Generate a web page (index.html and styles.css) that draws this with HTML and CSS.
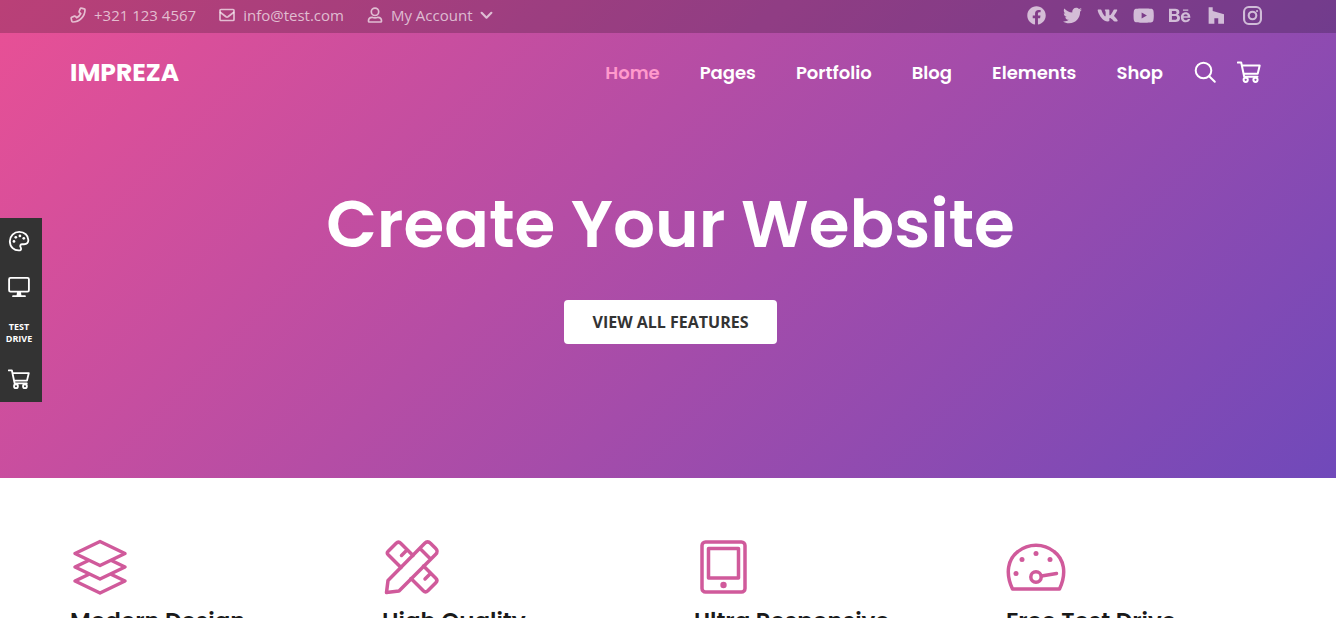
FILE: index.html
```html
<!DOCTYPE html>
<html lang="en">
<head>
  <meta charset="UTF-8">
  <meta name="viewport" content="width=device-width, initial-scale=1.0">
  <title>Impreza</title>
  <link rel="stylesheet" href="styles.css">
</head>
<body>
  <div class="top-area">
    <header>
      <div class="topbar">
        <div class="container topbar-inner">
          <div class="contacts">
            <a href="tel:+3211234567" class="contact">
              <svg class="icon-small" viewBox="0 0 16 16"><path d="M11.3 1.2l2.9.6c.5.1.8.4.8.9C15 9.500 9.500 15 2.700 15c-.5 0-.8-.3-.9-.8l-.6-2.900c-.1-.4.1-.8.5-1l2.800-1.200c.4-.1.8 0 1 .3l1.200 1.400c1.800-.9 3.200-2.300 4.100-4.100L9.400 5.500c-.3-.2-.4-.6-.3-1l1.200-2.800c.2-.4.6-.6 1-.5z"/></svg>
              <span>+321 123 4567</span>
            </a>
            <a href="mailto:info@test.com" class="contact">
              <svg class="icon-small" viewBox="0 0 16 16"><rect x="1" y="2.500" width="14" height="11" rx="1"/><path d="M1.500 5.500L7 9.700c.6.4 1.400.4 2 0l5.500-4.200"/></svg>
              <span>info@test.com</span>
            </a>
            <button class="contact account">
              <svg class="icon-small" viewBox="0 0 16 16"><circle cx="8" cy="4.800" r="3.700"/><path d="M5 10.300c1.200.5 1.800.6 3 .6s1.800-.1 3-.6c2 .1 3.500 1.600 3.500 3.500v.4c0 .5-.3.8-.8.8H2.300c-.5 0-.8-.3-.8-.8v-.4c0-1.900 1.500-3.400 3.500-3.500z"/></svg>
              <span>My Account</span>
              <svg class="chevron" viewBox="0 0 12 12"><path d="M1.500 3.500L6 8l4.500-4.500"/></svg>
            </button>
          </div>
          <div class="socials">
            <a href="#" aria-label="Facebook"><svg viewBox="0 0 512 512"><path d="M504 256C504 119 393 8 256 8S8 119 8 256c0 123.780 90.690 226.380 209.250 245V327.690h-63V256h63v-54.640c0-62.150 37-96.480 93.670-96.480 27.140 0 55.520 4.840 55.520 4.840v61h-31.280c-30.800 0-40.410 19.120-40.410 38.730V256h68.780l-11 71.690h-57.780V501C413.310 482.380 504 379.780 504 256z"/></svg></a>
            <a href="#" aria-label="Twitter"><svg viewBox="0 0 512 512"><path d="M459.370 151.716c.325 4.548.325 9.097.325 13.645 0 138.720-105.583 298.558-298.558 298.558-59.452 0-114.680-17.219-161.137-47.106 8.447.974 16.568 1.299 25.340 1.299 49.055 0 94.213-16.568 130.274-44.832-46.132-.975-84.792-31.188-98.112-72.772 6.498.974 12.995 1.624 19.818 1.624 9.421 0 18.843-1.300 27.614-3.573-48.081-9.747-84.143-51.980-84.143-102.985v-1.299c13.969 7.797 30.214 12.670 47.431 13.319-28.264-18.843-46.781-51.005-46.781-87.391 0-19.492 5.197-37.360 14.294-52.954 51.655 63.675 129.300 105.258 216.365 109.807-1.624-7.797-2.599-15.918-2.599-24.040 0-57.828 46.782-104.934 104.934-104.934 30.213 0 57.502 12.670 76.670 33.137 23.715-4.548 46.456-13.320 66.599-25.340-7.798 24.366-24.366 44.833-46.132 57.827 21.117-2.273 41.584-8.122 60.426-16.243-14.292 20.791-32.161 39.308-52.628 54.253z"/></svg></a>
            <a href="#" aria-label="VK"><svg viewBox="0 0 576 512"><path d="M545 117.700c3.700-12.500 0-21.700-17.800-21.700h-58.900c-15 0-21.900 7.900-25.600 16.700 0 0-30 73.100-72.400 120.500-13.700 13.700-20 18.100-27.500 18.100-3.700 0-9.400-4.400-9.400-16.900V117.700c0-15-4.200-21.700-16.600-21.700h-92.600c-9.400 0-15 7-15 13.500 0 14.200 21.200 17.500 23.400 57.500v86.800c0 19-3.400 22.500-10.900 22.500-20 0-68.600-73.400-97.400-157.400-5.800-16.300-11.500-22.900-26.600-22.900H38.800c-16.800 0-20.200 7.900-20.200 16.700 0 15.600 20 93.100 93.100 195.500C160.400 378.100 229 416 291.400 416c37.500 0 42.100-8.400 42.100-22.900 0-66.800-3.400-73.100 15.400-73.100 8.700 0 23.700 4.400 58.700 38.100 40 40 46.600 57.900 69 57.900h58.900c16.800 0 25.300-8.400 20.400-25-11.200-34.900-86.900-106.700-90.300-111.500-8.700-11.200-6.200-16.200 0-26.200.1-.1 72-101.300 79.400-135.600z"/></svg></a>
            <a href="#" aria-label="YouTube"><svg viewBox="0 0 576 512"><path d="M549.655 124.083c-6.281-23.650-24.787-42.276-48.284-48.597C458.781 64 288 64 288 64S117.220 64 74.629 75.486c-23.497 6.322-42.003 24.947-48.284 48.597-11.412 42.867-11.412 132.305-11.412 132.305s0 89.438 11.412 132.305c6.281 23.650 24.787 41.500 48.284 47.821C117.220 448 288 448 288 448s170.780 0 213.371-11.486c23.497-6.321 42.003-24.171 48.284-47.821 11.412-42.867 11.412-132.305 11.412-132.305s0-89.438-11.412-132.305zm-317.510 213.508V175.185l142.739 81.205-142.739 81.201z"/></svg></a>
            <a href="#" aria-label="Behance"><svg viewBox="0 0 576 512"><path d="M232 237.200c31.800-15.200 48.400-38.200 48.400-74 0-70.600-52.600-87.800-113.300-87.800H0v354.400h171.800c64.400 0 124.900-30.900 124.900-102.900 0-44.500-21.100-77.400-64.700-89.700zM77.900 135.900H151c28.100 0 53.400 7.900 53.400 40.500 0 30.100-19.700 42.200-47.500 42.200h-79v-82.700zm83.300 233.700H77.900V272h84.900c34.300 0 56 14.300 56 50.600 0 35.800-25.900 47-57.600 47zm358.500-240.700H376V94h143.700v34.900zM576 305.200c0-75.900-44.400-139.200-124.900-139.200-78.200 0-131.300 58.800-131.300 135.800 0 79.900 50.300 134.700 131.300 134.700 61.300 0 101-27.600 120.100-86.300H509c-6.700 21.900-34.300 33.500-55.700 33.500-41.300 0-63-24.200-63-65.300h185.100c.3-4.200.6-8.700.6-13.200zM390.400 274c2.300-33.700 24.700-54.800 58.500-54.800 35.400 0 53.200 20.800 56.200 54.800H390.400z"/></svg></a>
            <a href="#" aria-label="Houzz"><svg viewBox="0 0 448 512"><path d="M275.900 330.700H171.300V480H17V32h109.500v104.500l305.100 85.600V480H275.900z"/></svg></a>
            <a href="#" aria-label="Instagram"><svg class="outline" viewBox="0 0 18 18"><rect x="1" y="1" width="16" height="16" rx="4.500"/><circle cx="9" cy="9" r="3.600"/><circle class="dot" cx="13.300" cy="4.700" r="1"/></svg></a>
          </div>
        </div>
      </div>
      <div class="container navbar">
        <a href="#" class="logo">IMPREZA</a>
        <div class="nav-right">
          <nav>
            <a href="#" class="active">Home</a>
            <a href="#">Pages</a>
            <a href="#">Portfolio</a>
            <a href="#">Blog</a>
            <a href="#">Elements</a>
            <a href="#">Shop</a>
          </nav>
          <button class="nav-icon" aria-label="Search">
            <svg viewBox="0 0 24 24"><circle cx="10.500" cy="10.500" r="7.800"/><path d="M16.200 16.200l5.600 5.600"/></svg>
          </button>
          <a href="#" class="nav-icon" aria-label="Cart">
            <svg viewBox="0 0 24 24"><path d="M.8 2.500h3.400l3 14.200h13.300M5 5.500h17.700l-2 8.300H6.600"/><circle cx="8.700" cy="19.800" r="2.100"/><circle cx="18.500" cy="19.800" r="2.100"/></svg>
          </a>
        </div>
      </div>
    </header>
    <section class="hero">
      <h1>Create Your Website</h1>
      <a href="#features" class="btn">VIEW ALL FEATURES</a>
    </section>
  </div>

  <section class="container features" id="features">
    <div class="feature">
      <svg viewBox="0 0 60 60"><path d="M30 4.500l25 12-25 12-25-12z"/><path d="M18.500 23.500L5 30l25 12 25-12-13.500-6.500"/><path d="M18.500 37.500L5 44l25 12 25-12-13.500-6.500"/></svg>
      <h2>Modern Design</h2>
    </div>
    <div class="feature">
      <svg viewBox="0 0 60 60"><path d="M4.500 55.500l1.500-12L42.500 6.500c2.200-2.200 4-2.200 6.200 0l4.800 4.800c2.200 2.200 2.200 4 0 6.200L17 54zM38 11.500l10.500 10.500"/><path d="M19 30.500L6.200 17.700c-1.500-1.500-1.500-2 0-3.500l8-8c1.500-1.500 3-1.500 4.500 0L31 18.500M41.500 29L53.800 41.300c1.500 1.500 1.500 3 0 4.500l-8 8c-1.500 1.500-3 1.500-4.500 0L29 41.500M19.500 18.500l4.500-4.500M43 42l4.500-4.500"/></svg>
      <h2>High Quality</h2>
    </div>
    <div class="feature">
      <svg viewBox="0 0 60 60"><rect x="8" y="5" width="43" height="50" rx="3.500"/><rect x="14.500" y="11.500" width="30" height="29.500"/><circle class="dot" cx="29.500" cy="48" r="3.200"/></svg>
      <h2>Ultra Responsive</h2>
    </div>
    <div class="feature">
      <svg viewBox="0 0 60 60"><path d="M6.500 52C-1 36 2 22 12 14.500c10.500-8.500 25.500-8.500 36 0C58 22 61 36 53.500 52z"/><circle cx="30" cy="40" r="5.200"/><path d="M35.500 39L50.500 36.500"/><g class="dot"><circle cx="10" cy="36.500" r="2.500"/><circle cx="16" cy="22.500" r="2.500"/><circle cx="30" cy="16.500" r="2.500"/><circle cx="44" cy="22.500" r="2.500"/></g></svg>
      <h2>Free Test Drive</h2>
    </div>
  </section>

  <aside class="side-panel">
    <a href="#" aria-label="Colors"><svg viewBox="0 0 24 24"><path d="M13 22.200C6.500 23 2 18 2 12.200 2 6.500 6.500 2 12.300 2 18 2 22.200 6 22.200 11c0 3-2.200 4.500-4.700 4.500h-2c-2 0-2.700 1.600-1.800 3.200.8 1.500.9 3.200-.5 3.500z"/><g class="dot"><circle cx="6.500" cy="12.500" r="1.500"/><circle cx="8.500" cy="8" r="1.500"/><circle cx="13" cy="6.500" r="1.500"/><circle cx="17.200" cy="9" r="1.500"/></g></svg></a>
    <a href="#" aria-label="Demos"><svg viewBox="0 0 24 24"><rect x="1.200" y="2" width="21.600" height="15" rx="1.500"/><path d="M5.500 22h13"/><path class="dot" d="M10 17h4l.8 5H9.200z"/></svg></a>
    <a href="#">TEST<br>DRIVE</a>
    <a href="#" aria-label="Buy"><svg viewBox="0 0 24 24"><path d="M.8 2.500h3.400l3 14.200h13.300M5 5.500h17.700l-2 8.300H6.600"/><circle cx="8.700" cy="19.800" r="2.100"/><circle cx="18.500" cy="19.800" r="2.100"/></svg></a>
  </aside>
</body>
</html>
```

FILE: styles.css
```css
* {
  box-sizing: border-box;
}
body {
  margin: 0;
  font-family: 'Open Sans', sans-serif;
  font-size: 16px;
  color: #333;
  background: white;
}
a {
  color: inherit;
  text-decoration: none;
}
button {
  font: inherit;
  color: inherit;
  background: none;
  border: none;
  padding: 0;
  cursor: pointer;
}
svg {
  display: block;
  fill: none;
  stroke: currentColor;
  stroke-width: 2;
  stroke-linecap: round;
  stroke-linejoin: round;
}
svg .dot {
  fill: currentColor;
  stroke: none;
}
.container {
  padding: 0 70px;
}
.top-area {
  color: white;
  background: linear-gradient(135deg, #e95095, #7049ba);
}

/* Top bar */
.topbar {
  background: rgba(0, 0, 0, 0.2);
  color: rgba(255, 255, 255, 0.66);
}
.topbar-inner {
  display: flex;
  justify-content: space-between;
  align-items: center;
  height: 33px;
  padding-bottom: 3px;
}
.contacts {
  display: flex;
  gap: 23px;
  font-size: 15px;
  line-height: 20px;
}
.contact {
  display: flex;
  align-items: center;
  gap: 8px;
}
.icon-small {
  width: 16px;
  height: 16px;
  stroke-width: 1.7;
}
.chevron {
  width: 13px;
  height: 13px;
}
.socials {
  display: flex;
}
.socials a {
  display: flex;
  justify-content: center;
  width: 36px;
}
.socials a:last-child {
  margin-right: -4px;
}
.socials svg {
  height: 19px;
  fill: currentColor;
  stroke: none;
}
.socials .outline {
  fill: none;
  stroke: currentColor;
}

/* Navigation */
.navbar {
  display: flex;
  justify-content: space-between;
  align-items: center;
  height: 80px;
  padding-right: 75px;
}
.logo {
  font-family: 'Poppins', 'Inter', sans-serif;
  font-size: 25px;
  font-weight: 700;
}
.nav-right {
  display: flex;
  align-items: center;
  padding-bottom: 2px;
}
nav {
  display: flex;
  gap: 40px;
  margin-right: 30px;
  font-family: 'Poppins', 'Inter', sans-serif;
  font-size: 18px;
  font-weight: 600;
}
nav .active {
  color: #ff99cc;
}
.nav-icon {
  margin-left: 20px;
}
nav + .nav-icon {
  margin-left: 0;
}
.nav-icon svg {
  width: 24px;
  height: 24px;
}

/* Hero */
.hero {
  display: flex;
  flex-direction: column;
  align-items: center;
  padding: 69px 70px 134px 75px;
}
h1 {
  margin: 0 0 34px;
  font-family: 'Poppins', 'Inter', sans-serif;
  font-size: 66px;
  font-weight: 600;
  line-height: 84px;
}
.btn {
  padding: 11px 28px;
  font-weight: 700;
  line-height: 22px;
  color: #333;
  background: white;
  border-radius: 4px;
}

/* Features */
.features {
  display: grid;
  grid-template-columns: repeat(4, 1fr);
  gap: 52px;
  padding-top: 59px;
  padding-bottom: 60px;
}
.feature svg {
  width: 60px;
  height: 60px;
  color: #d05a9b;
  stroke-width: 3.5;
}
h2 {
  margin: 8px 0 0;
  font-family: 'Poppins', 'Inter', sans-serif;
  font-size: 23px;
  font-weight: 600;
  line-height: 32px;
  color: #1a1a1a;
  white-space: nowrap;
}

/* Side panel */
.side-panel {
  position: fixed;
  left: 0;
  top: 50%;
  transform: translateY(-50%);
  width: 42px;
  margin-top: 1px;
  padding-right: 4px;
  color: white;
  background: #333;
}
.side-panel a {
  display: flex;
  justify-content: center;
  align-items: center;
  height: 46px;
  font-size: 9px;
  font-weight: 700;
  line-height: 12px;
  text-align: center;
}
.side-panel svg {
  width: 22px;
  height: 22px;
}
```
